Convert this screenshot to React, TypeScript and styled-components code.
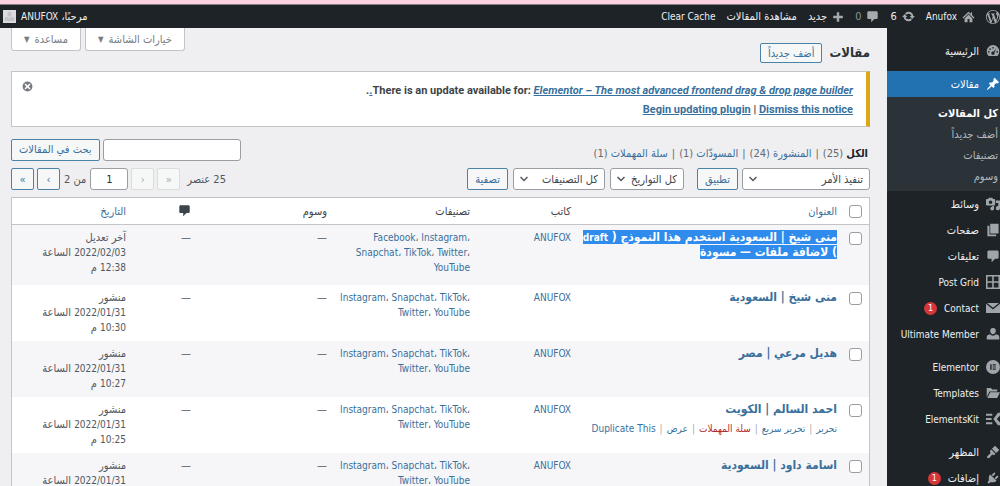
import React from "react";
import styled, { createGlobalStyle, css } from "styled-components";

const Global = createGlobalStyle`
  *, *::before, *::after { box-sizing: border-box; }
  body {
    margin: 0;
    background: #efeff1;
    color: #50575e;
    font: 11px/15px "DejaVu Sans Condensed", "DejaVu Sans", Tahoma, sans-serif;
    overflow: hidden;
  }
  [lang="en"] { font-size: 10px; }
  a { color: #39709c; text-decoration: none; }
  button, input, select { font: inherit; margin: 0; }
  svg { display: block; flex: none; }
`;

const Page = styled.div`
  display: flex;
  flex-direction: column;
  height: 100vh;
  overflow: hidden;
`;

const Strip = styled.div`
  flex: none;
  height: 5px;
  background: #fbd3e0;
  border-bottom: 1px solid #8b7a82;
`;

const AdminBar = styled.header`
  flex: none;
  display: flex;
  align-items: center;
  justify-content: space-between;
  height: 23px;
  padding-left: 3px;
  background: #1d2327;
`;

const BarGroup = styled.nav`
  display: flex;
  align-items: center;
  gap: 11px;
`;

const BarLink = styled.a<{ $dim?: boolean }>`
  display: flex;
  align-items: center;
  gap: 5px;
  color: ${(p) => (p.$dim ? "#8c9196" : "#eeeff0")};
  white-space: nowrap;
  svg { color: #a7aaad; }
`;

const Avatar = styled.span`
  display: grid;
  place-items: center;
  width: 13px;
  height: 13px;
  background: #dcdcde;
  svg { color: #c3c4c7; }
`;

const Body = styled.div`
  flex: 1;
  display: flex;
  min-height: 0;
`;

const Sidebar = styled.nav`
  flex: none;
  width: 113px;
  padding-top: 10px;
  background: #1d2327;
  color: #eeeff0;
`;

const MenuItem = styled.a<{ $active?: boolean; $spaced?: boolean }>`
  display: flex;
  align-items: center;
  gap: 7px;
  height: 26px;
  margin-top: ${(p) => (p.$spaced ? "7px" : "0")};
  color: ${(p) => (p.$active ? "#fff" : "#eeeff0")};
  background: ${(p) => (p.$active ? "#2271b1" : "transparent")};
  white-space: nowrap;
  svg { color: ${(p) => (p.$active ? "#fff" : "#a0a5aa")}; }
`;

const Badge = styled.span`
  display: grid;
  place-items: center;
  width: 13px;
  height: 13px;
  border-radius: 50%;
  background: #d63638;
  color: #fff;
  font-size: 9px;
  line-height: 13px;
`;

const SubMenu = styled.div`
  display: flex;
  flex-direction: column;
  padding: 6px 2px 4px;
  background: #2c3338;
`;

const SubLink = styled.a<{ $current?: boolean }>`
  line-height: 21px;
  font-weight: ${(p) => (p.$current ? "bold" : "normal")};
  color: ${(p) => (p.$current ? "#fff" : "#b5b9bd")};
`;

const Main = styled.main`
  flex: 1;
  min-width: 0;
  padding: 0 17px 0 11px;
`;

const TopRow = styled.div`
  display: flex;
  justify-content: space-between;
  height: 43px;
`;

const Heading = styled.div`
  display: flex;
  align-items: center;
  gap: 7px;
  padding-top: 7px;
`;

const Title = styled.h1`
  margin: 0;
  font-size: 13px;
  line-height: 24px;
  font-weight: bold;
  color: #2c3338;
`;

const ScreenTabs = styled.div`
  display: flex;
  align-items: flex-start;
  gap: 4px;
`;

const ScreenTab = styled.button`
  display: flex;
  align-items: center;
  gap: 5px;
  height: 23px;
  padding: 0 12px;
  border: 1px solid #c3c4c7;
  border-top: 0;
  border-radius: 0 0 3px 3px;
  background: #fff;
  color: #787c82;
  span { font-size: 8px; }
`;

const outline = css`
  border: 1px solid #4a83a8;
  border-radius: 2px;
  background: #f6f7f7;
  color: #39709c;
`;

const AddButton = styled.button`
  ${outline}
  height: 20px;
  padding: 0 7px;
`;

const Button = styled.button<{ $square?: boolean }>`
  ${outline}
  flex: none;
  height: 22px;
  min-width: ${(p) => (p.$square ? "23px" : "0")};
  padding: ${(p) => (p.$square ? "0" : "0 7px")};
  &:disabled { border-color: #dcdcde; color: #a7aaad; }
`;

const Notice = styled.section`
  display: flex;
  justify-content: space-between;
  align-items: flex-start;
  padding: 7px 13px 5px 10px;
  border: 1px solid #c3c4c7;
  border-right: 4px solid #dba617;
  background: #fff;
  color: #3c434a;
  font-weight: bold;
  p { margin: 4px 0; }
  a { text-decoration: underline; }
`;

const NoticeText = styled.div`
  && {
    font-family: Roboto, "DejaVu Sans Condensed", sans-serif;
    font-size: 11px;
  }
`;

const Dismiss = styled.button`
  padding: 2px 0 0;
  border: 0;
  background: none;
  color: #787c82;
`;

const Toolbar = styled.div<{ $first?: boolean }>`
  display: flex;
  align-items: center;
  justify-content: space-between;
  margin-top: ${(p) => (p.$first ? "11px" : "7px")};
`;

const Views = styled.div`
  display: flex;
  gap: 4px;
  padding: 8px 2px 0;
  color: #646970;
  b { color: #1d2327; }
`;

const Group = styled.div<{ $gap: number }>`
  display: flex;
  align-items: center;
  gap: ${(p) => p.$gap}px;
`;

const Field = styled.input<{ $w: number }>`
  width: ${(p) => p.$w}px;
  height: 22px;
  padding: 0 4px;
  border: 1px solid #9a9da1;
  border-radius: 3px;
  background: #fff;
  color: #2c3338;
  text-align: center;
`;

const SelectBox = styled.span<{ $w: number }>`
  display: grid;
  align-items: center;
  width: ${(p) => p.$w}px;
  height: 22px;
  > * { grid-area: 1 / 1; }
  svg { justify-self: end; margin-left: 7px; pointer-events: none; color: #50575e; }
`;

const Select = styled.select`
  appearance: none;
  width: 100%;
  height: 22px;
  padding: 0 6px;
  border: 1px solid #9a9da1;
  border-radius: 3px;
  background: #fff;
  color: #3c434a;
`;

const Table = styled.table`
  width: 100%;
  margin-top: 7px;
  table-layout: fixed;
  border-collapse: separate;
  border-spacing: 0;
  border: 1px solid #c3c4c7;
  background: #fff;
  th, td {
    padding: 5px 7px 6px 0;
    text-align: right;
    vertical-align: top;
    font-weight: normal;
  }
  thead th { padding: 6px 7px 5px 0; border-bottom: 1px solid #c3c4c7; color: #3c434a; }
  tbody tr:nth-child(odd) { background: #f6f6f8; }
  th:first-child, td:first-child { padding: 5px 7px 0 0; }
`;

const Check = styled.input`
  appearance: none;
  display: block;
  width: 13px;
  height: 13px;
  margin: 2px 0 0;
  border: 1px solid #9a9da1;
  border-radius: 3px;
  background: #fff;
`;

const PostLink = styled.a`
  font-size: 12px;
  font-weight: bold;
`;

const Selected = styled.span`
  background: #2f8cec;
  color: #fff;
`;

const DateCell = styled.td`
  && { padding-left: 20px; }
`;

const RowActions = styled.div<{ $shown?: boolean }>`
  display: flex;
  gap: 4px;
  padding-top: 4px;
  font-size: 10px;
  color: #a7aaad;
  white-space: nowrap;
  visibility: ${(p) => (p.$shown ? "visible" : "hidden")};
`;

const TrashLink = styled.a`
  color: #b32d2e;
`;

const icons: Record<string, React.ReactNode> = {
  wordpress: (
    <path d="M20 10c0-5.51-4.49-10-10-10C4.48 0 0 4.49 0 10c0 5.52 4.48 10 10 10 5.51 0 10-4.48 10-10zM7.78 15.37L4.37 6.22c.55-.02 1.17-.08 1.17-.08.5-.06.44-1.13-.06-1.11 0 0-1.45.11-2.37.11-.18 0-.37 0-.58-.01C4.12 2.69 6.87 1.11 10 1.11c2.33 0 4.45.87 6.05 2.34-.68-.11-1.65.39-1.65 1.58 0 .74.45 1.36.9 2.1.35.61.55 1.36.55 2.46 0 1.49-1.4 5-1.4 5l-3.03-8.37c.54-.02.82-.17.82-.17.5-.05.44-1.25-.06-1.22 0 0-1.44.12-2.38.12-.87 0-2.33-.12-2.33-.12-.5-.03-.56 1.2-.06 1.22l.92.08 1.26 3.41zM17.41 10c.24-.64.74-1.87.43-4.25.7 1.29 1.05 2.71 1.05 4.25 0 3.29-1.73 6.24-4.4 7.78.97-2.59 1.94-5.2 2.92-7.78zM6.1 18.09C3.12 16.65 1.11 13.53 1.11 10c0-1.3.23-2.48.72-3.59C3.25 10.3 4.67 14.2 6.1 18.09zm4.03-6.63l2.58 6.98c-.86.29-1.76.45-2.71.45-.79 0-1.57-.11-2.29-.33.81-2.38 1.62-4.74 2.42-7.1z" />
  ),
  home: <path d="M15.500 8V3.500h-2v2.600L10 2.500 .8 11.500l1.400 1.500L10 5.300l7.800 7.700 1.400-1.500zM10 7l6 6v6h-4.500v-5h-3v5H4v-6z" />,
  update: <path d="M10.2 2.600c3.800 0 6.800 2.900 7.300 6.500h2.300l-4 4.800-4-4.800h2.600c-.4-2-2.100-3.500-4.200-3.500-1.400 0-2.600.6-3.400 1.600L4.700 5C6 3.500 8 2.600 10.200 2.600zm-.4 14.800c-3.800 0-6.800-2.900-7.300-6.500H.2l4-4.800 4 4.800H5.600c.4 2 2.100 3.500 4.200 3.500 1.400 0 2.600-.6 3.400-1.600l2.100 2.200c-1.300 1.500-3.300 2.400-5.500 2.400z" />,
  comment: <path d="M4 2h12c1.100 0 2 .9 2 2v8c0 1.100-.9 2-2 2h-3l-5 5v-5H4c-1.100 0-2-.9-2-2V4c0-1.100.9-2 2-2z" />,
  plus: <path d="M18 8v4h-6v6H8v-6H2V8h6V2h4v6z" />,
  dashboard: (
    <path
      fillRule="evenodd"
      d="M3.760 17h12.480A9 9 0 1 0 3.760 17zM10 4.200a1.200 1.200 0 1 1 0 2.400 1.200 1.200 0 0 1 0-2.400zM5.800 6a1.200 1.200 0 1 1 0 2.400A1.200 1.200 0 0 1 5.800 6zM4 10a1.200 1.200 0 1 1 0 2.400A1.200 1.200 0 0 1 4 10zm12 0a1.200 1.200 0 1 1 0 2.400 1.200 1.200 0 0 1 0-2.400zm-.7-3.800L11.900 12a2.300 2.300 0 1 1-1.500-1.100z"
    />
  ),
  pin: <path d="M10.440 3.020l1.820-1.820 6.360 6.350-1.830 1.820c-1.050-.68-2.480-.57-3.410.36l-.75.75c-.92.93-1.040 2.350-.35 3.410l-1.830 1.820-2.410-2.410-2.800 2.790c-.42.42-3.380 2.710-3.800 2.290s1.860-3.390 2.280-3.810l2.790-2.790L4.100 9.360l1.830-1.820c1.050.69 2.480.57 3.400-.36l.75-.75c.93-.92 1.050-2.350.36-3.410z" />,
  media: (
    <path
      fillRule="evenodd"
      d="M1 3h2l1-2h5l1 2h2c.6 0 1 .4 1 1v7c0 .6-.4 1-1 1H1c-.6 0-1-.4-1-1V4c0-.6.4-1 1-1zm5.500 2a2.500 2.500 0 1 0 0 5 2.500 2.500 0 0 0 0-5zM14 5h6v11a3 3 0 1 1-2.500-3V8.500H14zM9 13h2.500v3.500a2.700 2.700 0 1 1-2.500-2.600z"
    />
  ),
  pages: <path d="M6 15V1h12v14H6zm-1 1.500h9.500V19H2V4h3z" />,
  grid: <path fillRule="evenodd" d="M0 0h20v20H0zm2.200 2.200v6.700h6.700V2.200zm8.900 0v6.700h6.700V2.200zM2.200 11.100v6.700h6.700v-6.700zm8.900 0v6.700h6.700v-6.700z" />,
  mail: <path d="M1.500 3h17L10 9.800zM0 4l10 8.200L20 4v13H0z" />,
  user: <path d="M10 1.500a4 4 0 0 1 4 4.200c0 2.400-1.800 4.800-4 4.800s-4-2.400-4-4.800a4 4 0 0 1 4-4.200zM5.500 10.500c1.200 1.300 2.700 2 4.500 2s3.300-.7 4.500-2c3.200.5 4.500 2.200 4.500 4.500v3H1v-3c0-2.300 1.300-4 4.500-4.500z" />,
  elementor: <path fillRule="evenodd" d="M10 0a10 10 0 1 0 0 20 10 10 0 0 0 0-20zM6 6h2v8H6zm3.500 0H14v1.700H9.500zm0 3.150H14v1.700H9.500zm0 3.150H14V14H9.500z" />,
  folder: <path d="M1 16V3h6l2 2h7v3H5zm5-7h14l-4 8H2z" />,
  kit: <path d="M0 2.500h9v3H0zm0 6h8v3H0zm0 6h9v3H0zM17 1h3v4l-4.500 5 4.500 5v4h-3l-6.500-9z" />,
  brush: <path d="M13 1l6 6-4.500 4.500-6-6zM7.500 6.500l6 6-2 2-2.500-1c-2 1.500-3.500 5.500-6 5.500-1.500 0-2-2-1-3 1.500-1.500 4-3 4.500-4.500L5.500 8.500z" />,
  plugin: <path d="M13.110 4.360L9.870 7.600 8 5.730l3.240-3.240c.35-.34 1.050-.2 1.560.32.520.51.66 1.210.31 1.550zm-8 1.770l.91-1.120 9.010 9.010-1.190.84c-.71.71-2.630 1.160-3.820 1.160H6.140L4.900 17.260c-.59.590-1.540.590-2.120 0-.59-.58-.59-1.530 0-2.120l1.240-1.240v-3.880c0-1.130.4-3.190 1.090-3.890zm7.260 3.970l3.240-3.240c.34-.35 1.040-.21 1.550.31.520.51.66 1.210.31 1.550l-3.240 3.250z" />,
  dismiss: <path fillRule="evenodd" d="M10 1a9 9 0 1 1 0 18 9 9 0 0 1 0-18zM6.500 4.500l-2 2L8 10l-3.500 3.500 2 2L10 12l3.500 3.500 2-2L12 10l3.500-3.500-2-2L10 8z" />,
};

const Icon = ({ name, size = 14 }: { name: string; size?: number }) => (
  <svg width={size} height={size} viewBox="0 0 20 20" fill="currentColor" aria-hidden="true">
    {icons[name]}
  </svg>
);

const Dropdown = ({ label, width }: { label: string; width: number }) => (
  <SelectBox $w={width}>
    <Select aria-label={label}>
      <option>{label}</option>
    </Select>
    <svg width="8" height="8" viewBox="0 0 8 8" fill="none" stroke="currentColor" strokeWidth="1.500">
      <path d="M0.500 2L4 5.500L7.500 2" />
    </svg>
  </SelectBox>
);

const submenu = ["كل المقالات", "أضف جديداً", "تصنيفات", "وسوم"];

const menu = [
  { icon: "media", label: "وسائط" },
  { icon: "pages", label: "صفحات" },
  { icon: "comment", label: "تعليقات" },
  { icon: "grid", label: "Post Grid", lang: "en" },
  { icon: "mail", label: "Contact", lang: "en", badge: 1 },
  { icon: "user", label: "Ultimate Member", lang: "en" },
  { icon: "elementor", label: "Elementor", lang: "en", spaced: true },
  { icon: "folder", label: "Templates", lang: "en" },
  { icon: "kit", label: "ElementsKit", lang: "en" },
  { icon: "brush", label: "المظهر", spaced: true },
  { icon: "plugin", label: "إضافات", badge: 1 },
];

const views = [
  { label: "المنشورة", count: 24 },
  { label: "المسودّات", count: 1 },
  { label: "سلة المهملات", count: 1 },
];

const shortTags = ["Instagram", "Snapchat", "TikTok", "Twitter", "YouTube"];

const posts = [
  {
    title: (
      <Selected>
        منى شيخ | السعودية استخدم هذا النموذج ( <span lang="en">draft</span> ) لاضافة ملفات — مسودة
      </Selected>
    ),
    tags: ["Facebook", ...shortTags],
    state: "آخر تعديل",
    date: "2022/02/03",
    time: "12:38",
  },
  { title: "منى شيخ | السعودية", tags: shortTags, state: "منشور", date: "2022/01/31", time: "10:30" },
  { title: "هديل مرعي | مصر", tags: shortTags, state: "منشور", date: "2022/01/31", time: "10:27" },
  { title: "احمد السالم | الكويت", tags: shortTags, state: "منشور", date: "2022/01/31", time: "10:25", hovered: true },
  { title: "اسامة داود | السعودية", tags: shortTags, state: "منشور", date: "2022/01/31", time: "10:20" },
];

export default function App() {
  return (
    <Page dir="rtl" lang="ar">
      <Global />
      <Strip />
      <AdminBar>
        <BarGroup>
          <BarLink href="#" aria-label="WordPress"><Icon name="wordpress" /></BarLink>
          <BarLink href="#" lang="en"><Icon name="home" size={13} />Anufox</BarLink>
          <BarLink href="#"><Icon name="update" size={13} />6</BarLink>
          <BarLink href="#" $dim><Icon name="comment" size={13} />0</BarLink>
          <BarLink href="#"><Icon name="plus" size={12} />جديد</BarLink>
          <BarLink href="#">مشاهدة المقالات</BarLink>
          <BarLink href="#" lang="en">Clear Cache</BarLink>
        </BarGroup>
        <BarLink href="#">
          <span>مرحبًا، <span lang="en">ANUFOX</span></span>
          <Avatar><Icon name="user" size={11} /></Avatar>
        </BarLink>
      </AdminBar>
      <Body>
        <Sidebar>
          <MenuItem href="#"><Icon name="dashboard" />الرئيسية</MenuItem>
          <MenuItem href="#" $active $spaced><Icon name="pin" />مقالات</MenuItem>
          <SubMenu>
            {submenu.map((s, i) => (
              <SubLink key={s} href="#" $current={i === 0}>{s}</SubLink>
            ))}
          </SubMenu>
          {menu.map((m) => (
            <MenuItem key={m.label} href="#" lang={m.lang} $spaced={m.spaced}>
              <Icon name={m.icon} />
              {m.label}
              {m.badge && <Badge>{m.badge}</Badge>}
            </MenuItem>
          ))}
        </Sidebar>
        <Main>
          <TopRow>
            <Heading>
              <Title>مقالات</Title>
              <AddButton>أضف جديداً</AddButton>
            </Heading>
            <ScreenTabs>
              <ScreenTab>خيارات الشاشة <span>▼</span></ScreenTab>
              <ScreenTab>مساعدة <span>▼</span></ScreenTab>
            </ScreenTabs>
          </TopRow>
          <Notice>
            <NoticeText lang="en">
              <p>
                There is an update available for:{" "}
                <a href="#"><i>Elementor – The most advanced frontend drag &amp; drop page builder</i>.</a>.
              </p>
              <p><a href="#">Begin updating plugin</a> | <a href="#">Dismiss this notice</a></p>
            </NoticeText>
            <Dismiss aria-label="تجاهل"><Icon name="dismiss" size={11} /></Dismiss>
          </Notice>
          <Toolbar $first>
            <Views>
              <span><b>الكل</b> (25)</span>
              {views.map((v) => (
                <React.Fragment key={v.label}>
                  <span>|</span>
                  <span><a href="#">{v.label}</a> ({v.count})</span>
                </React.Fragment>
              ))}
            </Views>
            <Group $gap={3}>
              <Field $w={138} type="search" aria-label="بحث في المقالات" />
              <Button>بحث في المقالات</Button>
            </Group>
          </Toolbar>
          <Toolbar>
            <Group $gap={13}>
              <Group $gap={4}>
                <Dropdown label="تنفيذ الأمر" width={128} />
                <Button>تطبيق</Button>
              </Group>
              <Group $gap={5}>
                <Dropdown label="كل التواريخ" width={74} />
                <Dropdown label="كل التصنيفات" width={92} />
                <Button>تصفية</Button>
              </Group>
            </Group>
            <Group $gap={3}>
              <Group $gap={7}>
                <span>25 عنصر</span>
                <Button $square disabled dir="ltr">»</Button>
              </Group>
              <Button $square disabled dir="ltr">›</Button>
              <Group $gap={4}>
                <Field $w={38} aria-label="الصفحة الحالية" defaultValue="1" />
                <span>من 2</span>
                <Button $square dir="ltr">‹</Button>
              </Group>
              <Button $square dir="ltr">«</Button>
            </Group>
          </Toolbar>
          <Table>
            <colgroup>
              <col width="25" />
              <col />
              <col width="101" />
              <col width="143" />
              <col width="136" />
              <col width="65" />
              <col width="121" />
            </colgroup>
            <thead>
              <tr>
                <th><Check type="checkbox" aria-label="تحديد الكل" /></th>
                <th><a href="#">العنوان</a></th>
                <th>كاتب</th>
                <th>تصنيفات</th>
                <th>وسوم</th>
                <th aria-label="تعليقات"><Icon name="comment" size={13} /></th>
                <th><a href="#">التاريخ</a></th>
              </tr>
            </thead>
            <tbody>
              {posts.map((p) => (
                <tr key={p.time}>
                  <td><Check type="checkbox" aria-label="تحديد المقالة" /></td>
                  <td>
                    <PostLink href="#">{p.title}</PostLink>
                    <RowActions $shown={p.hovered}>
                      <a href="#">تحرير</a>|<a href="#">تحرير سريع</a>|<TrashLink href="#">سلة المهملات</TrashLink>|
                      <a href="#">عرض</a>|<a href="#">Duplicate This</a>
                    </RowActions>
                  </td>
                  <td><a href="#" lang="en">ANUFOX</a></td>
                  <td lang="en">
                    {p.tags.map((t, i) => (
                      <React.Fragment key={t}>
                        {i > 0 && "، "}
                        <a href="#">{t}</a>
                      </React.Fragment>
                    ))}
                  </td>
                  <td>—</td>
                  <td>—</td>
                  <DateCell>
                    {p.state}<br />
                    <span lang="en">{p.date}</span> الساعة <span lang="en">{p.time}</span> م
                  </DateCell>
                </tr>
              ))}
            </tbody>
          </Table>
        </Main>
      </Body>
    </Page>
  );
}
